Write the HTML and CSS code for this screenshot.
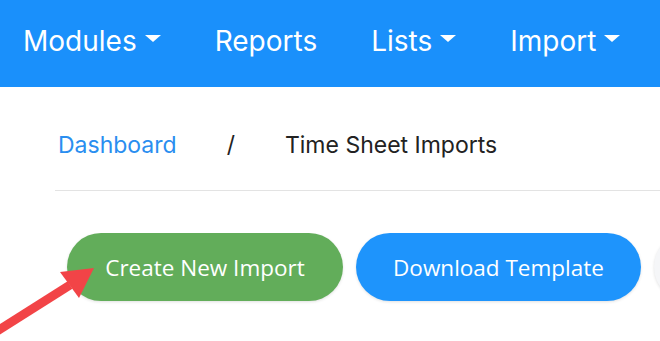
FILE: index.html
```html
<!DOCTYPE html>
<html lang="en">
<head>
  <meta charset="UTF-8" />
  <title>Time Sheet Imports</title>
  <link rel="stylesheet" href="styles.css">
</head>
<body>
  <nav class="topnav">
    <a class="nav-item">Modules <span class="caret"></span></a>
    <a class="nav-item">Reports</a>
    <a class="nav-item">Lists <span class="caret"></span></a>
    <a class="nav-item">Import <span class="caret"></span></a>
  </nav>

  <div class="content">
    <div class="breadcrumb">
      <a class="crumb-link">Dashboard</a>
      <span class="crumb-sep">/</span>
      <span class="crumb-current">Time Sheet Imports</span>
    </div>

    <div class="actions">
      <button class="btn btn-green">Create New Import</button>
      <button class="btn btn-blue">Download Template</button>
      <button class="btn btn-light"></button>
    </div>
  </div>

  <!-- annotation arrow -->
  <svg class="arrow" width="100" height="86" viewBox="0 0 100 86">
    <line x1="-6" y1="78" x2="70" y2="30" stroke="#f24447" stroke-width="9" />
    <polygon points="94,13 60,17 79,43" fill="#f24447" />
  </svg>
</body>
</html>
```

FILE: styles.css
```css
body {
  margin: 0;
  font-family: 'Inter', sans-serif;
  background: #fff;
  overflow: hidden;
}
.topnav {
  background-color: #1a90fb;
  height: 87px;
  display: flex;
  align-items: center;
  padding-left: 23px;
  white-space: nowrap;
  overflow: hidden;
}
.nav-item {
  color: #fff;
  font-size: 28px;
  display: flex;
  align-items: center;
  margin-right: 54px;
  padding-bottom: 6px;
}
.caret {
  display: inline-block;
  width: 0;
  height: 0;
  margin-left: 8px;
  border-left: 8px solid transparent;
  border-right: 8px solid transparent;
  border-top: 7px solid #fff;
  margin-top: -4px;
}
.content {
  padding-left: 55px;
}
.breadcrumb {
  display: flex;
  align-items: center;
  height: 104px;
  border-bottom: 1px solid #e3e3e3;
  padding-left: 3px;
  padding-top: 12px;
  font-size: 23px;
  box-sizing: border-box;
}
.crumb-link {
  color: #2a8ef0;
}
.crumb-sep {
  color: #222;
  margin: 0 50px;
}
.crumb-current {
  color: #222;
}
.actions {
  display: flex;
  gap: 13px;
  margin-top: 42px;
  padding-left: 12px;
  padding-bottom: 4px;
  white-space: nowrap;
  overflow: hidden;
}
.btn {
  height: 68px;
  border-radius: 34px;
  border: none;
  font-family: 'Open Sans', sans-serif;
  font-size: 22.5px;
  color: #fff;
  flex-shrink: 0;
  padding: 0;
  box-shadow: 0 1px 3px rgba(0,0,0,0.12);
}
.btn-green {
  width: 276px;
  background-color: #62ad5a;
}
.btn-blue {
  width: 285px;
  background-color: #1e94fc;
}
.btn-light {
  width: 200px;
  background-color: #f5f6f8;
}
.arrow {
  position: absolute;
  left: 0;
  top: 255px;
}
```
